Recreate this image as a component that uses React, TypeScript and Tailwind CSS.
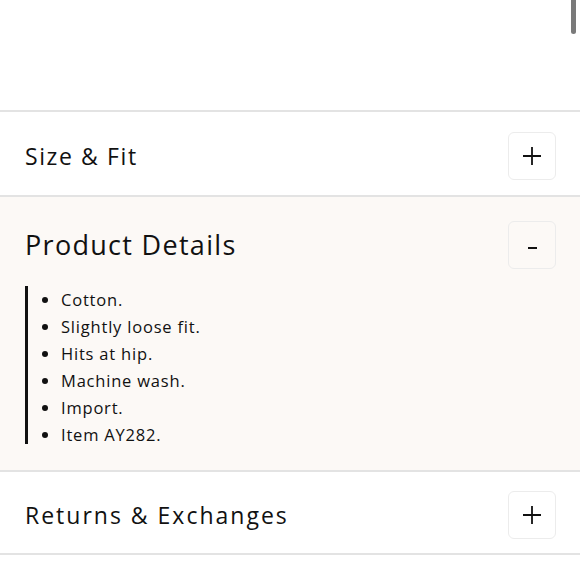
const details = [
  'Cotton.',
  'Slightly loose fit.',
  'Hits at hip.',
  'Machine wash.',
  'Import.',
  'Item AY282.'
];

const ToggleBox = ({ open }: { open: boolean }) => (
  <div className="w-[48px] h-[48px] rounded-md border border-[#ececec] flex items-center justify-center text-[#111]">
    {open ? (
      <span className="w-[9px] h-[2px] mt-[5px] bg-[#111]" />
    ) : (
      <svg width="20" height="20" viewBox="0 0 20 20" fill="none" stroke="currentColor" strokeWidth="1.8">
        <path d="M10 1v18M1 10h18" />
      </svg>
    )}
  </div>
);

const App = () => {
  return (
    <div
      className="relative w-[580px] h-[580px] bg-white text-[#111] overflow-hidden"
      style={{ fontFamily: '"Open Sans", Lato, sans-serif' }}
    >
      {/* scrollbar thumb */}
      <div className="absolute right-[4px] top-0 w-[5px] h-[34px] rounded-b-full bg-[#7a7a7a]" />

      <div className="h-[110px]" />

      {/* Size & Fit */}
      <div className="border-t-2 border-[#e3e3e3] pl-[25px] pr-[24px] pt-[20px] pb-[15px] flex items-center justify-between">
        <h2 className="text-[23px] tracking-[1.6px]">Size &amp; Fit</h2>
        <ToggleBox open={false} />
      </div>

      {/* Product Details */}
      <div className="border-t-2 border-[#e3e3e3] bg-[#fcf9f6] pl-[25px] pr-[24px] pt-[24px] pb-[26px]">
        <div className="flex items-center justify-between">
          <h2 className="text-[27px] tracking-[1.3px]">Product Details</h2>
          <ToggleBox open={true} />
        </div>
        <div className="mt-[17px] h-[158px] border-l-[3px] border-[#111] pl-[17px]">
          <ul className="list-disc pl-[16px] text-[16.5px] leading-[27px] tracking-[0.8px]">
            {details.map((d) => (
              <li key={d}>{d}</li>
            ))}
          </ul>
        </div>
      </div>

      {/* Returns & Exchanges */}
      <div className="border-y-2 border-[#e3e3e3] pl-[25px] pr-[24px] pt-[19px] pb-[14px] flex items-center justify-between">
        <h2 className="text-[23px] tracking-[2px]">Returns &amp; Exchanges</h2>
        <ToggleBox open={false} />
      </div>
    </div>
  );
};

export default App;
